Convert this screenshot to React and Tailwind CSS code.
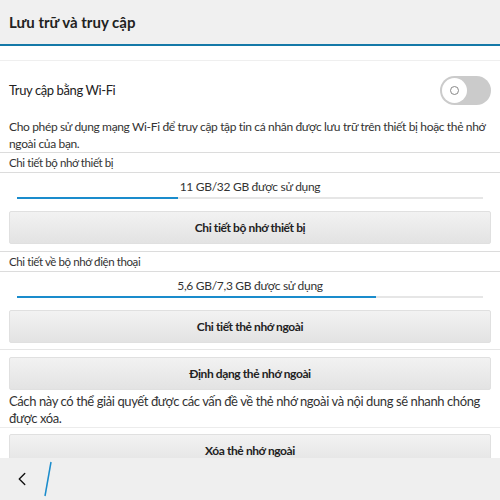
import { ChevronLeft } from "lucide-react";

const FONT = { fontFamily: "Lato, 'Open Sans', sans-serif" };

function SectionHeader({ children }) {
  return (
    <div className="h-[21px] flex items-center px-[9px] border-t border-b border-[#dcdcdc] text-[11.5px] tracking-[-0.4px] text-[#333]">
      {children}
    </div>
  );
}

function Usage({ label, pct }) {
  return (
    <div className="pt-[6px]">
      <p className="text-center text-[12px] tracking-[-0.3px] text-[#333] leading-[16px]">{label}</p>
      <div className="mx-[17px] mt-[2px] h-[2px] bg-[#e6e6e6]">
        <div className="h-full bg-[#1a8ccc]" style={{ width: `${pct}%` }} />
      </div>
    </div>
  );
}

function Btn({ children }) {
  return (
    <div className="mx-[9px] h-[33px] flex items-center justify-center rounded-[2px] bg-gradient-to-b from-[#f2f2f2] to-[#e3e3e3] border border-[#e0e0e0] text-[12px] tracking-[-0.4px] font-bold text-[#222]">
      {children}
    </div>
  );
}

export default function App() {
  return (
    <div className="w-[500px] h-[500px] flex flex-col bg-white overflow-hidden" style={FONT}>
      {/* Title bar */}
      <div className="h-[46px] shrink-0 bg-[#f0f0f0] flex items-center px-[9px] border-b-2 border-[#1479a8]">
        <h1 className="text-[15px] font-bold text-[#222]">Lưu trữ và truy cập</h1>
      </div>

      <div className="flex-1 overflow-hidden">
        <div className="h-[15px] border-b border-[#efefef]" />

        {/* Wi-Fi toggle */}
        <div className="h-[57px] flex items-center justify-between px-[9px] pt-[2px]">
          <span className="text-[13px] tracking-[-0.4px] text-[#222]">Truy cập bằng Wi-Fi</span>
          <div className="w-[51px] h-[29px] rounded-full bg-[#cbcbcb] p-[2px] flex items-center">
            <div className="w-[25px] h-[25px] rounded-full bg-white flex items-center justify-center">
              <div className="w-[9px] h-[9px] rounded-full border border-[#888]" />
            </div>
          </div>
        </div>

        <p className="px-[9px] text-[12px] tracking-[-0.35px] leading-[17px] text-[#333]">
          Cho phép sử dụng mạng Wi-Fi để truy cập tập tin cá nhân được lưu trữ trên thiết bị hoặc thẻ nhớ ngoài của bạn.
        </p>

        <SectionHeader>Chi tiết bộ nhớ thiết bị</SectionHeader>
        <Usage label="11 GB/32 GB được sử dụng" pct={34.5} />
        <div className="pt-[12px] pb-[7px]">
          <Btn>Chi tiết bộ nhớ thiết bị</Btn>
        </div>

        <SectionHeader>Chi tiết về bộ nhớ điện thoại</SectionHeader>
        <Usage label="5,6 GB/7,3 GB được sử dụng" pct={77} />
        <div className="pt-[12px] pb-[6px] border-b border-[#e6e6e6]">
          <Btn>Chi tiết thẻ nhớ ngoài</Btn>
        </div>

        <div className="pt-[7px]">
          <Btn>Định dạng thẻ nhớ ngoài</Btn>
        </div>
        <p className="px-[9px] pt-[3px] text-[13px] tracking-[-0.4px] leading-[17px] text-[#333] border-b border-[#ececec]">
          Cách này có thể giải quyết được các vấn đề về thẻ nhớ ngoài và nội dung sẽ nhanh chóng được xóa.
        </p>
        <div className="pt-[6px]">
          <Btn>Xóa thẻ nhớ ngoài</Btn>
        </div>
      </div>

      {/* Bottom action bar */}
      <div className="h-[42px] shrink-0 bg-[#efefef] flex items-center">
        <div className="w-[44px] flex justify-center">
          <ChevronLeft size={22} strokeWidth={1.5} className="text-[#111]" />
        </div>
        <svg width="10" height="36" viewBox="0 0 10 36" className="-ml-[1px]">
          <line x1="8" y1="1" x2="2" y2="35" stroke="#1a8ccc" strokeWidth="1.5" />
        </svg>
      </div>
    </div>
  );
}
